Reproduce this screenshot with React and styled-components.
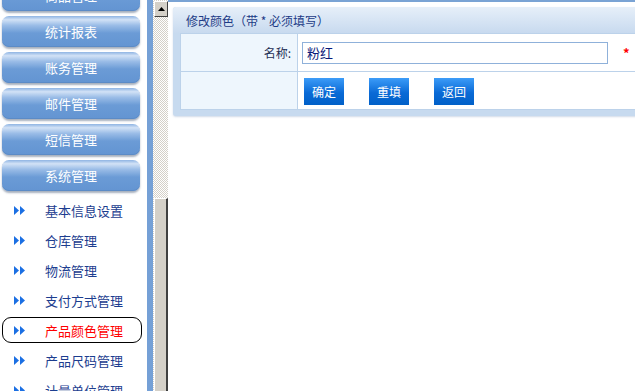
import React, { useState } from 'react';
import styled, { createGlobalStyle } from 'styled-components';

const GlobalStyle = createGlobalStyle`
    html, body {
        margin: 0;
        padding: 0;
        background: #ffffff;
        overflow: hidden;
    }
    body {
        font-family: "Noto Sans CJK SC", "Liberation Sans", sans-serif;
        font-size: 12px;
    }
`;

const Frame = styled.div`
    display: flex;
    width: 635px;
    height: 391px;
    overflow: hidden;
    background: #ffffff;
`;

const Sidebar = styled.div`
    width: 147px;
    flex-shrink: 0;
    display: flex;
    flex-direction: column;
    margin-top: -20px;
`;

const MenuButton = styled.div`
    flex-shrink: 0;
    margin-left: 2px;
    width: 138px;
    height: 31px;
    margin-bottom: 5px;
    border-radius: 7px;
    background: linear-gradient(to bottom, #8fb4e3 0%, #d2e2f6 12%, #9bbde7 30%, #6b9bd6 55%, #6394d2 100%);
    box-shadow: 0 2px 2px rgba(60, 80, 110, 0.45), inset 0 -1px 0 #5c8bc6;
    color: #ffffff;
    font-size: 13px;
    display: flex;
    align-items: center;
    justify-content: center;
`;

const SubList = styled.div`
    flex-shrink: 0;
    display: flex;
    flex-direction: column;
    margin-top: -1px;
`;

const SubItem = styled.div`
    flex-shrink: 0;
    height: 30px;
    display: flex;
    align-items: center;
    padding-left: 12px;
    margin-left: 2px;
    width: 140px;
    box-sizing: border-box;
    position: relative;
    font-size: 13px;
    color: ${(p) => (p.$active ? '#ff0000' : '#1c3d8f')};
    &::before {
        content: '';
        display: ${(p) => (p.$active ? 'block' : 'none')};
        position: absolute;
        left: 0;
        right: 0;
        top: 2px;
        bottom: 2px;
        border: 1px solid #000000;
        border-radius: 9px;
    }
`;

const Arrow = styled.svg`
    width: 12px;
    height: 9px;
    margin-right: 19px;
    flex-shrink: 0;
`;

const BlueBar = styled.div`
    width: 6px;
    flex-shrink: 0;
    background: #75a0d6;
`;

const ScrollBar = styled.div`
    width: 15px;
    flex-shrink: 0;
    display: flex;
    flex-direction: column;
    background-color: #ffffff;
    background-image: conic-gradient(#d4d0c8 25%, #ffffff 25% 50%, #d4d0c8 50% 75%, #ffffff 75%);
    background-size: 2px 2px;
`;

const ScrollButton = styled.div`
    flex-shrink: 0;
    margin: 1px 0 0 1px;
    width: 14px;
    height: 16px;
    box-sizing: border-box;
    background: #d4d0c8;
    border-top: 1px solid #ffffff;
    border-left: 1px solid #ffffff;
    border-right: 1px solid #404040;
    border-bottom: 1px solid #404040;
    display: flex;
    align-items: center;
    justify-content: center;
`;

const ScrollTrack = styled.div`
    height: 181px;
    flex-shrink: 0;
`;

const ScrollThumb = styled.div`
    flex: 1;
    margin-left: 1px;
    background: #d4d0c8;
    border-top: 1px solid #ffffff;
    border-left: 1px solid #ffffff;
    border-right: 2px solid #404040;
`;

const Main = styled.div`
    flex: 1;
    min-width: 0;
    border-top: 2px solid #7aa3d4;
    padding: 5px 0 0 5px;
    overflow: hidden;
`;

const Panel = styled.div`
    width: 700px;
    background: #c7daef;
    border-radius: 3px;
    padding: 0 0 6px 7px;
    box-shadow: 0 1px 2px rgba(120, 150, 190, 0.35);
`;

const PanelHeader = styled.div`
    height: 26px;
    margin-left: -7px;
    padding-left: 13px;
    display: flex;
    align-items: center;
    background: linear-gradient(to bottom, #e6eff9, #c8daef);
    color: #1d3b86;
    font-size: 12px;
    white-space: pre;
    border-radius: 3px 3px 0 0;
`;

const FormTable = styled.div`
    display: grid;
    grid-template-columns: 116px 1fr;
    border: 1px solid #bcd2ea;
    background: #bcd2ea;
    gap: 1px;
`;

const LabelCell = styled.div`
    height: 37px;
    background: #eef6fd;
    display: flex;
    align-items: center;
    justify-content: flex-end;
    padding-right: 6px;
    color: #1f2f55;
    font-size: 12px;
`;

const FieldCell = styled.div`
    height: 37px;
    background: #ffffff;
    display: flex;
    align-items: center;
    padding-left: ${(p) => p.$pad || 4}px;
    gap: 25px;
`;

const TextInput = styled.input`
    width: 306px;
    height: 22px;
    box-sizing: border-box;
    border: 1px solid #8fb1da;
    padding: 0 4px;
    font-family: "Noto Sans CJK SC", sans-serif;
    font-size: 13px;
    color: #0a1a7a;
    outline: none;
`;

const Required = styled.span`
    color: #ff0000;
    font-weight: bold;
    font-size: 13px;
    margin-left: -10px;
`;

const ActionButton = styled.button`
    width: 40px;
    height: 27px;
    border: none;
    padding: 0;
    margin-top: 2px;
    background: linear-gradient(to bottom, #3c9cf8, #0a6ad6 55%, #0060c8);
    color: #ffffff;
    font-family: "Noto Sans CJK SC", sans-serif;
    font-size: 12px;
    cursor: pointer;
`;

const menus = ['商品管理', '统计报表', '账务管理', '邮件管理', '短信管理', '系统管理'];
const subItems = ['基本信息设置', '仓库管理', '物流管理', '支付方式管理', '产品颜色管理', '产品尺码管理', '计量单位管理'];

const App = () => {
    const [name, setName] = useState('粉红');

    return (
        <Frame>
            <GlobalStyle />
            <Sidebar>
                {menus.map((m) => (
                    <MenuButton key={m}>{m}</MenuButton>
                ))}
                <SubList>
                    {subItems.map((s) => (
                        <SubItem key={s} $active={s === '产品颜色管理'}>
                            <Arrow viewBox="0 0 12 9">
                                <polygon points="0,0 5,4.5 0,9" fill="#1b6fe3" />
                                <polygon points="6,0 11,4.5 6,9" fill="#1b6fe3" />
                            </Arrow>
                            {s}
                        </SubItem>
                    ))}
                </SubList>
            </Sidebar>
            <BlueBar />
            <ScrollBar>
                <ScrollButton>
                    <svg width="7" height="4" viewBox="0 0 7 4">
                        <polygon points="0,4 3.5,0 7,4" fill="#000000" />
                    </svg>
                </ScrollButton>
                <ScrollTrack />
                <ScrollThumb />
            </ScrollBar>
            <Main>
                <Panel>
                    <PanelHeader>修改颜色（带 * 必须填写）</PanelHeader>
                    <FormTable>
                        <LabelCell>名称:</LabelCell>
                        <FieldCell>
                            <TextInput value={name} onChange={(e) => setName(e.target.value)} />
                            <Required>*</Required>
                        </FieldCell>
                        <LabelCell />
                        <FieldCell $pad={6}>
                            <ActionButton>确定</ActionButton>
                            <ActionButton>重填</ActionButton>
                            <ActionButton>返回</ActionButton>
                        </FieldCell>
                    </FormTable>
                </Panel>
            </Main>
        </Frame>
    );
};

export default App;
